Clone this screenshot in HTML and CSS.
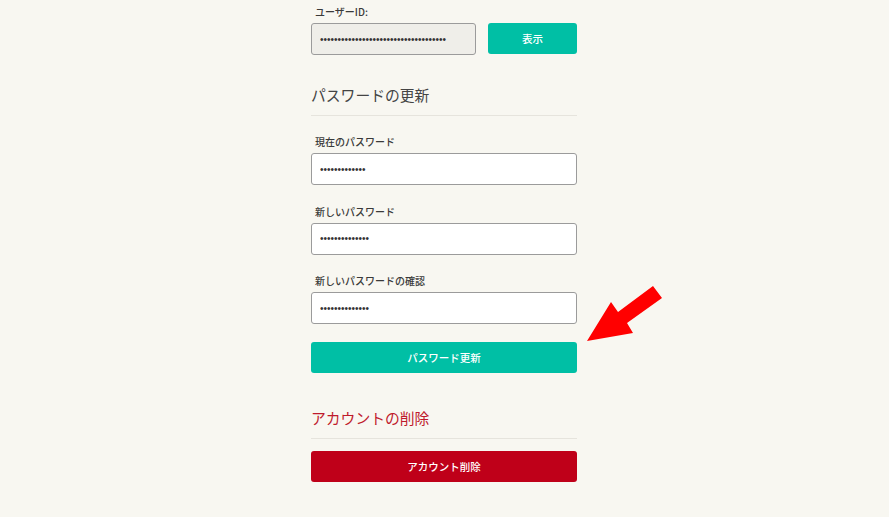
FILE: index.html
```html
<!DOCTYPE html>
<html lang="ja">
<head>
    <meta charset="utf-8">
    <title>アカウント設定</title>
    <link rel="stylesheet" href="styles.css">
</head>
<body>
    <div class="settings">
        <div class="field field-id">
            <label class="field-label" for="user-id">ユーザーID:</label>
            <div class="id-row">
                <input type="password" id="user-id" class="text-input readonly-input" value="abcdefghijklmnopqrstuvwxyz0123456789" readonly>
                <button class="btn btn-teal show-button">表示</button>
            </div>
        </div>

        <h2 class="section-title">パスワードの更新</h2>
        <hr class="divider">

        <div class="field">
            <label class="field-label" for="current-password">現在のパスワード</label>
            <input type="password" id="current-password" class="text-input" value="abcdefghijklm">
        </div>
        <div class="field">
            <label class="field-label" for="new-password">新しいパスワード</label>
            <input type="password" id="new-password" class="text-input" value="abcdefghijklmn">
        </div>
        <div class="field">
            <label class="field-label" for="confirm-password">新しいパスワードの確認</label>
            <input type="password" id="confirm-password" class="text-input" value="abcdefghijklmn">
        </div>

        <button class="btn btn-teal btn-wide update-button">パスワード更新</button>

        <h2 class="section-title danger-title">アカウントの削除</h2>
        <hr class="divider">

        <button class="btn btn-red btn-wide">アカウント削除</button>
    </div>

    <svg class="arrow" width="889" height="517" viewBox="0 0 889 517">
        <polygon points="587,341 611,302 618,312 653,286 662,298 627,323 633,333" fill="#ff0000"/>
    </svg>
</body>
</html>
```

FILE: styles.css
```css
body {
    margin: 0;
    background: #f8f7f1;
    font-family: "Noto Sans CJK JP", "Noto Sans", sans-serif;
    color: #3a3a3a;
}

.settings {
    width: 266px;
    margin-left: calc(50% - 133.5px);
    padding-top: 4px;
    display: flex;
    flex-direction: column;
}

.field {
    display: flex;
    flex-direction: column;
    margin-bottom: 18.5px;
}

.field-id {
    margin-bottom: 0;
}

.field-label {
    font-size: 10px;
    line-height: 16px;
    font-weight: 500;
    color: #3a3a3a;
    margin: 0 0 3px 4px;
}

.id-row {
    display: flex;
    gap: 12px;
}

.text-input {
    box-sizing: border-box;
    height: 32px;
    width: 100%;
    padding: 0 8px;
    border: 1px solid #9b9b9b;
    border-radius: 3px;
    background: #fff;
    font-family: "Liberation Sans", sans-serif;
    font-size: 10px;
    color: #333;
    outline: none;
}

.readonly-input {
    width: 165px;
    flex: none;
    background: #efeee9;
}

.btn {
    box-sizing: border-box;
    height: 31px;
    border: none;
    border-radius: 3px;
    color: #fff;
    font-family: "Noto Sans CJK JP", sans-serif;
    font-size: 10.5px;
    font-weight: 500;
    cursor: pointer;
}

.btn-teal {
    background: #00bfa5;
}

.btn-red {
    background: #bf0019;
}

.show-button {
    width: 89px;
}

.btn-wide {
    width: 100%;
}

.update-button {
    margin-top: -1px;
}

.section-title {
    margin: 28px 0 0 0;
    font-size: 14.8px;
    line-height: 24px;
    font-weight: 400;
    color: #444;
}

.danger-title {
    margin-top: 33px;
    color: #bf1a2c;
}

.divider {
    border: none;
    border-top: 1px solid #e6e4dd;
    margin: 8px 0 18px 0;
}

.danger-title + .divider {
    margin-bottom: 12px;
}

.arrow {
    position: absolute;
    left: 0;
    top: 0;
    pointer-events: none;
}
```
